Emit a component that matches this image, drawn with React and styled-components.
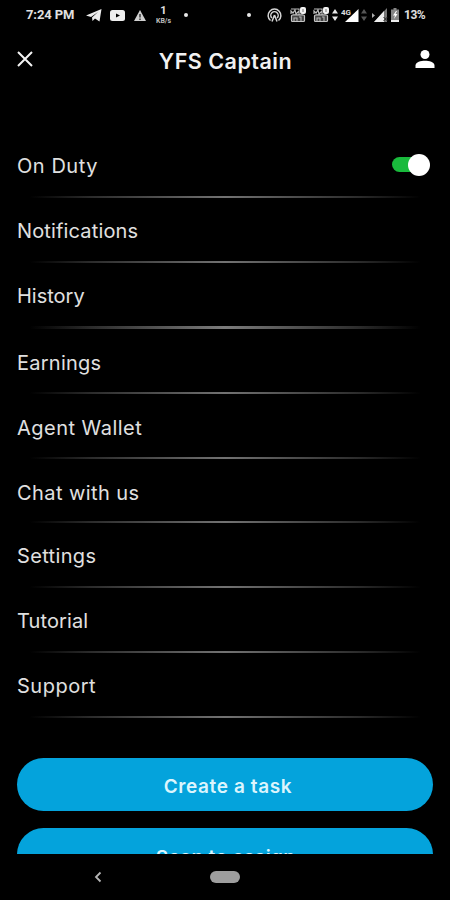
import styled, { createGlobalStyle } from "styled-components";

const GlobalStyle = createGlobalStyle`
  body {
    margin: 0;
    background: #000;
  }
`;

const Screen = styled.div`
  width: 450px;
  height: 900px;
  display: flex;
  flex-direction: column;
  overflow: hidden;
  background: #000;
  color: #e0e0e0;
  font-family: Inter, "Liberation Sans", sans-serif;
`;

const StatusBar = styled.div`
  height: 30px;
  flex-shrink: 0;
  display: flex;
  align-items: center;
  box-sizing: border-box;
  padding-left: 26px;
  font-family: Roboto, sans-serif;
  font-size: 13px;
  font-weight: 700;
  color: #e0e0e0;
`;

const StatusText = styled.span`
  width: ${({ $width }) => $width}px;
  margin-left: ${({ $gap }) => $gap || 0}px;
  font-size: ${({ $size }) => $size || 13}px;
  letter-spacing: ${({ $track }) => $track || 0}px;
  line-height: 30px;
  white-space: nowrap;
`;

const StatusIcon = styled.svg`
  flex-shrink: 0;
  margin-left: ${({ $gap }) => $gap}px;
`;

const Speed = styled.div`
  width: 17px;
  margin-left: 9px;
  display: flex;
  flex-direction: column;
  align-items: center;
`;

const SpeedValue = styled.span`
  font-size: 11px;
  line-height: 12px;
`;

const SpeedUnit = styled.span`
  font-size: 7px;
  line-height: 8px;
  color: #bdbdbd;
`;

const Dot = styled.span`
  width: 4px;
  height: 4px;
  margin-left: ${({ $gap }) => $gap}px;
  border-radius: 50%;
  background: #e8e8e8;
`;

const Header = styled.header`
  height: 62px;
  flex-shrink: 0;
  display: flex;
  align-items: center;
  justify-content: space-between;
  box-sizing: border-box;
  padding: 0 15px 4px 17px;
`;

const IconButton = styled.button`
  display: flex;
  padding: 0;
  border: none;
  background: none;
  color: #fff;
`;

const Title = styled.h1`
  margin: 4px 0 0 3px;
  font-size: 21.5px;
  font-weight: 600;
  line-height: 28px;
  letter-spacing: 0.5px;
  color: #f1f1f1;
`;

const Content = styled.main`
  height: 762px;
  flex-shrink: 0;
  display: flex;
  flex-direction: column;
  box-sizing: border-box;
  padding: 40px 17px 0;
  overflow: hidden;
`;

const MenuRow = styled.div`
  height: ${({ $height }) => $height}px;
  flex-shrink: 0;
  display: flex;
  flex-direction: column;
  justify-content: flex-end;
`;

const RowBody = styled.div`
  display: flex;
  align-items: center;
  justify-content: space-between;
  height: 26px;
  padding-right: 3px;
  margin-bottom: ${({ $space }) => $space}px;
`;

const Label = styled.span`
  font-size: 20px;
  line-height: 26px;
  letter-spacing: ${({ $track }) => $track}px;
  white-space: nowrap;
`;

const Divider = styled.div`
  height: ${({ $thick }) => ($thick ? 3 : 2)}px;
  background: linear-gradient(
    90deg,
    transparent 3%,
    #2c2c2c 18%,
    ${({ $thick }) => ($thick ? "#7c7c7c" : "#727272")} 50%,
    #2c2c2c 82%,
    transparent 97%
  );
`;

const Switch = styled.span`
  display: flex;
  align-items: center;
  margin-bottom: 3px;
`;

const Track = styled.span`
  width: 28px;
  height: 15px;
  margin-right: -12px;
  border-radius: 8px;
  background: #19ba3c;
`;

const Knob = styled.span`
  width: 22px;
  height: 22px;
  flex-shrink: 0;
  border-radius: 50%;
  background: #fff;
`;

const Actions = styled.div`
  display: flex;
  flex-direction: column;
  gap: 17px;
  padding-top: 40px;
`;

const ActionButton = styled.button`
  width: 416px;
  height: 53px;
  flex-shrink: 0;
  padding: ${({ $pad }) => $pad};
  border: none;
  border-radius: 27px;
  background: #04a3dc;
  color: #dcf5fd;
  font-family: inherit;
  font-size: 19px;
  font-weight: 600;
  letter-spacing: ${({ $track }) => $track}px;
`;

const NavBar = styled.nav`
  height: 46px;
  display: grid;
  grid-template-columns: 1fr 30px 1fr;
  align-items: center;
`;

const BackIcon = styled.svg`
  justify-self: center;
  margin-right: 15px;
`;

const HomePill = styled.span`
  height: 12px;
  border-radius: 6px;
  background: #9e9e9e;
`;

const menu = [
  { label: "On Duty", height: 66, space: 17, track: 0.55, toggle: true },
  { label: "Notifications", height: 65, space: 17, track: 0.15 },
  { label: "History", height: 66, space: 17, track: 0, thick: true },
  { label: "Earnings", height: 65, space: 16, track: 0.25 },
  { label: "Agent Wallet", height: 65, space: 16, track: 0.48 },
  { label: "Chat with us", height: 64, space: 15, track: 0.43 },
  { label: "Settings", height: 65, space: 17, track: 0.35 },
  { label: "Tutorial", height: 65, space: 17, track: 0.1 },
  { label: "Support", height: 65, space: 17, track: 0.5 },
];

function VoIcon({ gap }) {
  return (
    <StatusIcon $gap={gap} width="17" height="16" viewBox="0 0 17 16">
      <path d="M1 2h8v1M1 7V4l2 2 2-3 1 4 3-3v4M3 8h10" fill="none" stroke="#bcbcbc" strokeWidth="1.2" />
      <rect x="1.5" y="8" width="13" height="6.5" rx="1" fill="#444" stroke="#c4c4c4" strokeWidth="1.2" />
      <path d="M4 14v-3h3v3m2-4h2v4" fill="none" stroke="#b5b5b5" strokeWidth="1.1" />
      <rect x="10" y="0" width="6" height="7" rx="2" fill="#f2f2f2" />
      <path d="M13 2v3" stroke="#777" />
    </StatusIcon>
  );
}

function UpDownIcon({ gap, color }) {
  return (
    <StatusIcon $gap={gap} width="6" height="12" viewBox="0 0 6 12">
      <path d="M3 0l3 4.5H0zM3 12l3-4.5H0z" fill={color} />
    </StatusIcon>
  );
}

function Status() {
  return (
    <StatusBar>
      <StatusText $width={49} $track={-0.1}>7:24 PM</StatusText>
      <StatusIcon $gap={11} width="16" height="14" viewBox="0 0 16 14">
        <path d="M0 7.5L15.5 1l-2 12.5-4.5-3L6.5 13l-.5-3.5L12 4 5 9z" fill="#eee" />
      </StatusIcon>
      <StatusIcon $gap={8} width="15" height="11" viewBox="0 0 15 11">
        <rect width="15" height="11" rx="2.5" fill="#eee" />
        <path d="M6 3.5l4 2-4 2z" fill="#000" />
      </StatusIcon>
      <StatusIcon $gap={9} width="12" height="11" viewBox="0 0 12 11">
        <path d="M6 0l6 11H0z" fill="#cfcfcf" />
        <path d="M6 4v3.5M6 8.5V10" stroke="#222" strokeWidth="1.3" />
      </StatusIcon>
      <Speed>
        <SpeedValue>1</SpeedValue>
        <SpeedUnit>KB/s</SpeedUnit>
      </Speed>
      <Dot $gap={12} />
      <Dot $gap={59} />
      <StatusIcon $gap={16} width="15" height="14" viewBox="0 0 15 14">
        <path
          d="M3.5 12.5A6.4 6.4 0 1 1 11.5 12.5M4.8 10A3.7 3.7 0 1 1 10.2 10M7.5 7L5 13.5M7.5 7l2.5 6.5"
          fill="none"
          stroke="#d4d4d4"
          strokeWidth="1.5"
        />
      </StatusIcon>
      <VoIcon gap={8} />
      <VoIcon gap={6} />
      <UpDownIcon gap={2} color="#e6e6e6" />
      <StatusIcon $gap={3} width="18" height="15" viewBox="0 0 18 15">
        <path d="M17.5 1v13H4z" fill="#fff" />
        <text x="0" y="7" fontSize="8" fontWeight="700" fill="#ddd">4G</text>
      </StatusIcon>
      <UpDownIcon gap={2} color="#555" />
      <StatusIcon $gap={5} width="17" height="14" viewBox="0 0 17 14">
        <path d="M15 0v14H2z" fill="#777" />
        <path d="M12 3v11H2z" fill="#eee" />
        <path d="M0 5l3 2.5L0 10z" fill="#aaa" />
        <path d="M11.5 9l4 4m0-4l-4 4" stroke="#222" />
      </StatusIcon>
      <StatusIcon $gap={2} width="8" height="14" viewBox="0 0 8 14">
        <path d="M0 1.5h2.5V0h3v1.5H8V14H0z" fill="#858585" />
        <path d="M0 12h8v2H0z" fill="#eee" />
        <path d="M5 3L2 7.5h2L3 11l3.5-5h-2L6 3z" fill="#fff" />
      </StatusIcon>
      <StatusText $gap={5} $width={26} $size={12} $track={-0.5}>13%</StatusText>
    </StatusBar>
  );
}

export default function App() {
  return (
    <>
      <GlobalStyle />
      <Screen>
        <Status />
        <Header>
          <IconButton aria-label="Close">
            <svg width="16" height="16" viewBox="0 0 16 16">
              <path d="M1 1l14 14M15 1L1 15" stroke="#f3f3f3" strokeWidth="2" />
            </svg>
          </IconButton>
          <Title>YFS Captain</Title>
          <IconButton aria-label="Profile">
            <svg width="20" height="18" viewBox="0 0 20 18">
              <circle cx="10" cy="4.5" r="4.5" fill="#fff" />
              <path d="M0.5 18v-2.5C0.5 12 6 10.8 10 10.8s9.5 1.2 9.5 4.7V18z" fill="#fff" />
            </svg>
          </IconButton>
        </Header>
        <Content>
          {menu.map((item) => (
            <MenuRow key={item.label} $height={item.height}>
              <RowBody $space={item.space}>
                <Label $track={item.track}>{item.label}</Label>
                {item.toggle && (
                  <Switch role="switch" aria-checked="true">
                    <Track />
                    <Knob />
                  </Switch>
                )}
              </RowBody>
              <Divider $thick={item.thick} />
            </MenuRow>
          ))}
          <Actions>
            <ActionButton $pad="4px 0 0 6px" $track={0.6}>Create a task</ActionButton>
            <ActionButton $pad="6px 0 0 1px" $track={0.4}>Scan to assign</ActionButton>
          </Actions>
        </Content>
        <NavBar>
          <BackIcon width="8" height="12" viewBox="0 0 8 12">
            <path d="M6.5 1.5L2 6l4.5 4.5" fill="none" stroke="#b5b5b5" strokeWidth="1.8" />
          </BackIcon>
          <HomePill />
        </NavBar>
      </Screen>
    </>
  );
}
